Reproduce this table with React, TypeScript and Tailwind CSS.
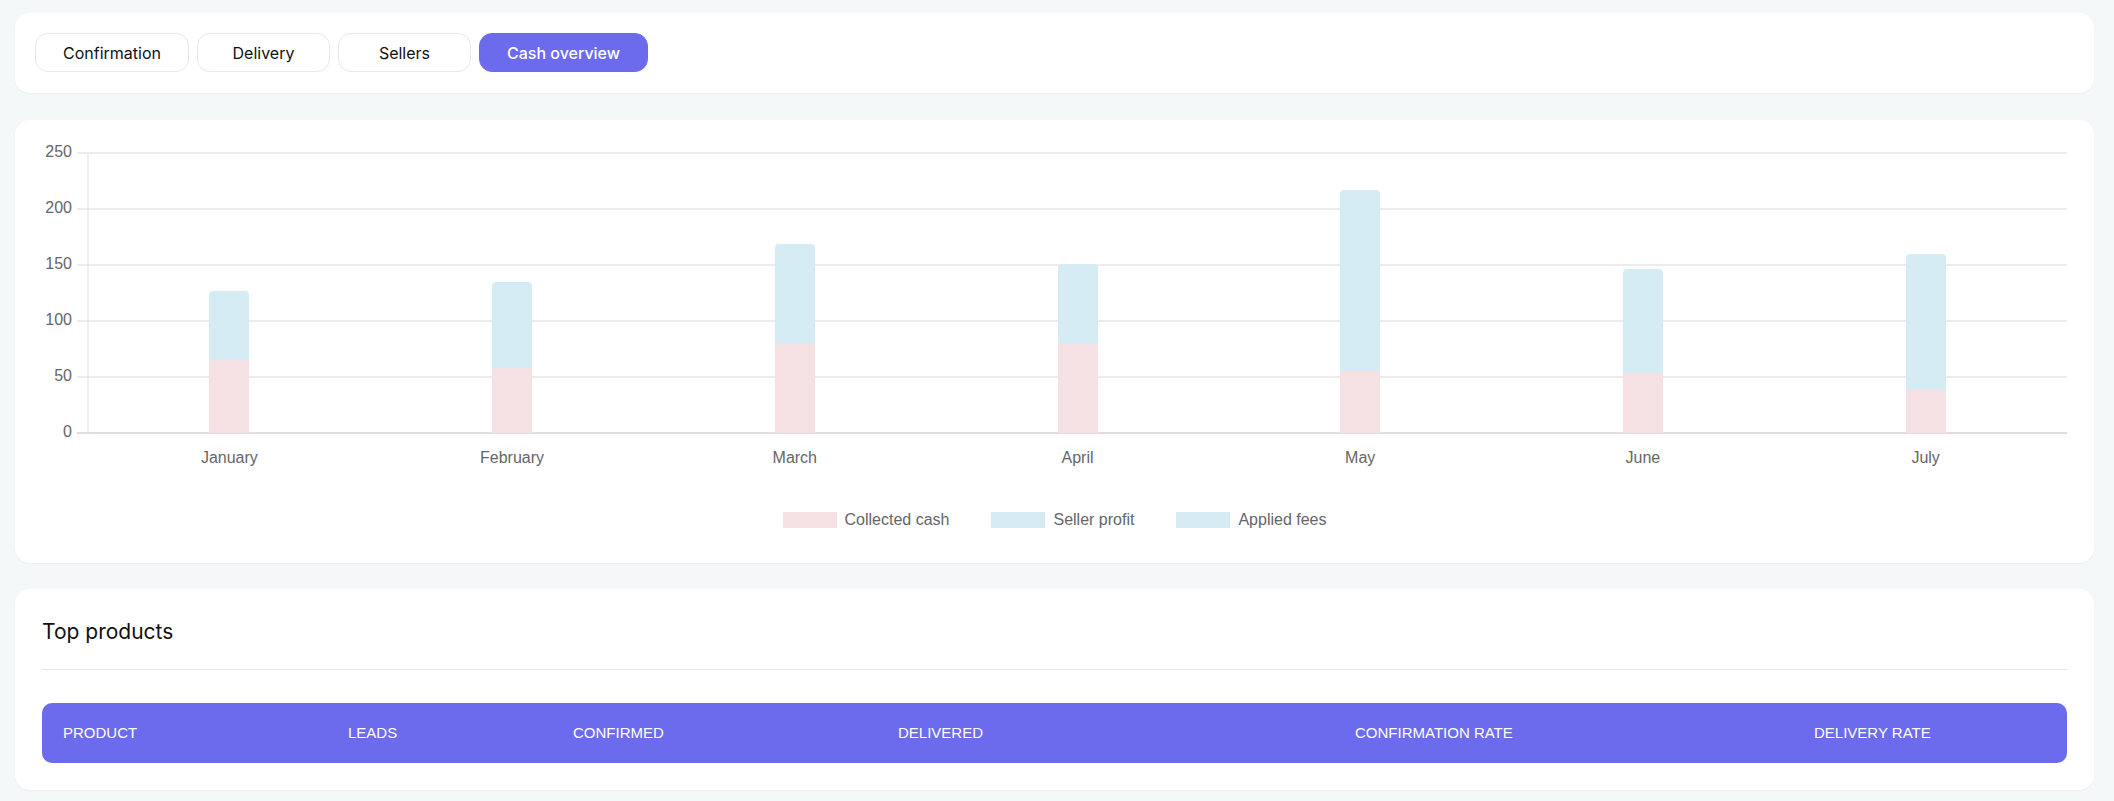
import React from 'react';

type MonthRow = { month: string; cash: number; total: number };

const months: MonthRow[] = [
    { month: 'January', cash: 65, total: 127 },
    { month: 'February', cash: 58, total: 135 },
    { month: 'March', cash: 80, total: 169 },
    { month: 'April', cash: 80, total: 151 },
    { month: 'May', cash: 55, total: 217 },
    { month: 'June', cash: 54, total: 146 },
    { month: 'July', cash: 38, total: 160 },
];

const tabs = ['Confirmation', 'Delivery', 'Sellers', 'Cash overview'];
const columns = ['Product', 'Leads', 'Confirmed', 'Delivered', 'Confirmation rate', 'Delivery rate'];

const PINK = '#f5e0e4';
const BLUE = '#d6ecf5';

// chart geometry (px inside the svg)
const W = 2039;
const H = 350;
const X0 = 53;
const X1 = 2032;
const Y_TOP = 13;
const Y_BOT = 293;
const PX_PER_UNIT = (Y_BOT - Y_TOP) / 250;
const BAR_W = 40;

const y = (v: number) => Y_BOT - v * PX_PER_UNIT;

const topRounded = (x: number, top: number, w: number, bottom: number, r: number) =>
    `M${x} ${bottom} V${top + r} Q${x} ${top} ${x + r} ${top} H${x + w - r} Q${x + w} ${top} ${x + w} ${top + r} V${bottom} Z`;

const CashChart: React.FC = () => {
    const step = (X1 - X0) / months.length;
    return (
        <svg viewBox={`0 0 ${W} ${H}`} width={W} height={H} className="block" style={{ fontFamily: '"Liberation Sans", Arial, sans-serif' }}>
            {[0, 50, 100, 150, 200, 250].map(v => (
                <g key={v}>
                    <line x1={42} x2={X1} y1={y(v)} y2={y(v)} stroke={v === 0 ? '#d4d4d4' : '#e6e6e6'} strokeWidth={1.3} />
                    <text x={37} y={y(v)} textAnchor="end" dominantBaseline="middle" fontSize={16} fill="#666">{v}</text>
                </g>
            ))}
            <line x1={X0} x2={X0} y1={Y_TOP} y2={Y_BOT} stroke="#e6e6e6" strokeWidth={1.3} />

            {months.map((m, i) => {
                const cx = X0 + step * (i + 0.5);
                const bx = Math.round(cx - BAR_W / 2);
                const cashTop = Math.round(y(m.cash));
                return (
                    <g key={m.month}>
                        <rect x={bx} y={cashTop} width={BAR_W} height={Y_BOT - cashTop} fill={PINK} />
                        {/* seller profit + applied fees share one colour */}
                        <path d={topRounded(bx, Math.round(y(m.total)), BAR_W, cashTop, 4)} fill={BLUE} />
                        <text x={cx} y={319} textAnchor="middle" dominantBaseline="middle" fontSize={16} fill="#666">{m.month}</text>
                    </g>
                );
            })}
        </svg>
    );
};

const LegendItem: React.FC<{ color: string; label: string }> = ({ color, label }) => (
    <div className="flex items-center gap-[8px]">
        <span className="w-[54px] h-[16px]" style={{ backgroundColor: color }} />
        <span className="text-[16px] leading-[16px] text-[#666]">{label}</span>
    </div>
);

export default function App() {
    return (
        <div className="min-h-screen bg-[#f5f8f9] pl-[15px] pr-[20px] pt-[13px] pb-[11px] font-['Liberation_Sans',Arial,sans-serif]">
            {/* Tabs */}
            <div className="bg-white rounded-[15px] pt-[20px] pb-[21px] px-[20px] shadow-[0_1px_2px_rgba(0,0,0,0.04)]">
                <div className="flex gap-[8px]">
                    {tabs.map(tab => {
                        const active = tab === 'Cash overview';
                        return (
                            <button
                                key={tab}
                                className={
                                    active
                                        ? "h-[39px] min-w-[133px] px-[27px] rounded-[13px] bg-[#6c6bee] border border-[#6c6bee] text-white text-[16px] font-medium font-['Inter',sans-serif]"
                                        : "h-[39px] min-w-[133px] px-[27px] rounded-[13px] bg-white border border-[#e6e8eb] text-[#111] text-[16px] font-['Inter',sans-serif]"
                                }
                            >
                                {tab}
                            </button>
                        );
                    })}
                </div>
            </div>

            {/* Chart */}
            <div className="mt-[27px] bg-white rounded-[15px] px-[20px] pt-[20px] pb-[35px] shadow-[0_1px_2px_rgba(0,0,0,0.04)]">
                <CashChart />
                <div className="mt-[22px] flex justify-center gap-[42px]">
                    <LegendItem color={PINK} label="Collected cash" />
                    <LegendItem color={BLUE} label="Seller profit" />
                    <LegendItem color={BLUE} label="Applied fees" />
                </div>
            </div>

            {/* Top products */}
            <div className="mt-[26px] bg-white rounded-[15px] px-[27px] pt-[29px] pb-[27px] shadow-[0_1px_2px_rgba(0,0,0,0.04)]">
                <h2 className="text-[21px] leading-[28px] text-[#111] font-['Inter',sans-serif]">Top products</h2>
                <div className="mt-[23px] border-b border-[#e5e5e5]" />
                <div className="mt-[33px] h-[60px] rounded-[10px] bg-[#6c6bee] grid grid-cols-[285px_225px_325px_457px_459px_1fr] items-center">
                    {columns.map(col => (
                        <div key={col} className="pl-[21px] text-[15px] uppercase text-white">{col}</div>
                    ))}
                </div>
            </div>
        </div>
    );
}
